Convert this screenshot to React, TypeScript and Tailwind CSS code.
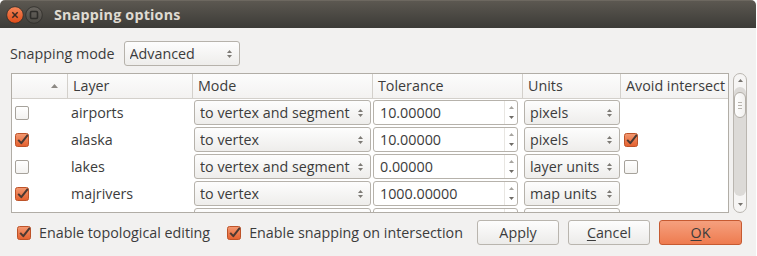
import React from 'react';

type Row = {
  checked: boolean;
  layer: string;
  mode: string;
  tolerance: string;
  units: string;
  avoid: boolean | null;
};

// last row is scrolled mostly out of view, only the top of its editors shows
const rows: Row[] = [
  { checked: false, layer: 'airports', mode: 'to vertex and segment', tolerance: '10.00000', units: 'pixels', avoid: null },
  { checked: true, layer: 'alaska', mode: 'to vertex', tolerance: '10.00000', units: 'pixels', avoid: true },
  { checked: false, layer: 'lakes', mode: 'to vertex and segment', tolerance: '0.00000', units: 'layer units', avoid: false },
  { checked: true, layer: 'majrivers', mode: 'to vertex', tolerance: '1000.00000', units: 'map units', avoid: null },
  { checked: false, layer: '', mode: '', tolerance: '', units: '', avoid: null },
];

// Ambiance style checkbox
const CheckBox = ({ checked }: { checked: boolean }) =>
  checked ? (
    <svg width="14" height="14" viewBox="0 0 14 14" className="shrink-0 overflow-visible">
      <defs>
        <linearGradient id="cbfill" x1="0" y1="0" x2="0" y2="1">
          <stop offset="0" stopColor="#f39a73" />
          <stop offset="1" stopColor="#e45f2d" />
        </linearGradient>
      </defs>
      <rect x="0.5" y="0.5" width="13" height="13" rx="2" fill="url(#cbfill)" stroke="#bd5329" />
      <path d="M3.2 6.8 L6.3 10.2 L12.8 1.8" stroke="#4a3932" strokeWidth="2" fill="none" strokeLinejoin="round" />
    </svg>
  ) : (
    <div className="w-[14px] h-[14px] shrink-0 rounded-[2px] border border-[#a6a29b] bg-linear-to-b from-white to-[#f3f2f0]" />
  );

const UpDown = () => (
  <svg width="7" height="12" viewBox="0 0 7 12" className="shrink-0">
    <path d="M3.5 2 L6 5 L1 5 Z" fill="#7d7a75" />
    <path d="M1 7 L6 7 L3.5 10 Z" fill="#7d7a75" />
  </svg>
);

const Combo = ({ text, width }: { text: string; width: string }) => (
  <div
    className={`${width} h-[25px] rounded-[3px] border border-[#b6b2ab] bg-linear-to-b from-[#fdfdfd] to-[#eeedeb] flex items-center pl-[5px] pr-[6px]`}
  >
    <span className="flex-1 whitespace-nowrap overflow-hidden">{text}</span>
    <UpDown />
  </div>
);

const SpinBox = ({ value }: { value: string }) => (
  <div className="w-[145px] h-[25px] rounded-[3px] border border-[#b6b2ab] bg-white flex items-stretch">
    <span className="flex-1 pl-[6px] flex items-center">{value}</span>
    <div className="w-[13px] border-l border-[#e8e6e2] flex flex-col items-center justify-between py-[5px]">
      <svg width="5" height="3" viewBox="0 0 5 3">
        <path d="M2.5 0 L5 3 L0 3 Z" fill="#a7a49f" />
      </svg>
      <svg width="5" height="3" viewBox="0 0 5 3">
        <path d="M0 0 L5 0 L2.5 3 Z" fill="#6f6c67" />
      </svg>
    </div>
  </div>
);

const Header = () => (
  <div className="grid grid-cols-[55px_125px_180px_150px_98px_1fr] h-[25px] border-b border-[#d3d0cb] bg-linear-to-b from-[#fcfcfc] to-[#f3f2f1]">
    <div className="flex items-center justify-end pr-[9px]">
      <svg width="7" height="4" viewBox="0 0 7 4">
        <path d="M3.5 0 L7 4 L0 4 Z" fill="#8c8984" />
      </svg>
    </div>
    <div className="border-l border-[#d3d0cb] pl-[5px] flex items-center">Layer</div>
    <div className="border-l border-[#d3d0cb] pl-[5px] flex items-center">Mode</div>
    <div className="border-l border-[#d3d0cb] pl-[5px] flex items-center">Tolerance</div>
    <div className="border-l border-[#d3d0cb] pl-[5px] flex items-center">Units</div>
    <div className="border-l border-[#d3d0cb] pl-[5px] flex items-center whitespace-nowrap overflow-hidden">Avoid intersect</div>
  </div>
);

const Scrollbar = () => (
  <div className="w-[14px] h-[140px] rounded-[7px] border border-[#bab6b0] bg-[#f6f5f4] flex flex-col items-center">
    <div className="h-[13px] flex items-center justify-center">
      <svg width="5" height="3" viewBox="0 0 5 3">
        <path d="M2.5 0 L5 3 L0 3 Z" fill="#76736e" />
      </svg>
    </div>
    <div className="w-[12px] flex-1 rounded-[6px] bg-[#dcdad7] flex flex-col">
      <div className="h-[26px] mt-[5px] rounded-[6px] border border-[#b3afa8] bg-linear-to-r from-white to-[#f1f0ee] flex flex-col items-center justify-center gap-[2px]">
        <div className="w-[4px] h-px bg-[#b9b5ae]" />
        <div className="w-[4px] h-px bg-[#b9b5ae]" />
        <div className="w-[4px] h-px bg-[#b9b5ae]" />
      </div>
    </div>
    <div className="h-[16px] flex items-center justify-center">
      <svg width="5" height="3" viewBox="0 0 5 3">
        <path d="M0 0 L5 0 L2.5 3 Z" fill="#76736e" />
      </svg>
    </div>
  </div>
);

const Button = ({ children, primary }: { children: React.ReactNode; primary?: boolean }) => (
  <button
    className={
      primary
        ? 'w-[83px] h-[25px] rounded-[3px] border border-[#c65a31] bg-linear-to-b from-[#f5a07e] to-[#ee7b4f] flex items-center justify-center'
        : 'w-[82px] h-[25px] rounded-[3px] border border-[#b9b5ae] bg-linear-to-b from-[#fdfdfd] to-[#ecebe9] flex items-center justify-center'
    }
  >
    {children}
  </button>
);

export default function App() {
  return (
    <div className="w-[757px] h-[256px] bg-white overflow-hidden font-['Open_Sans',sans-serif] text-[14.3px] leading-[18px] text-[#3c3c3c]">
      <div className="w-[756px] h-[256px] bg-[#f2f1f0] flex flex-col rounded-t-[5px] overflow-hidden">
        {/* title bar */}
        <div className="h-[28px] shrink-0 bg-linear-to-b from-[#5c5851] to-[#3c3b37] border-t border-[#6d6860] flex items-center pl-[6px]">
          <svg width="18" height="18" viewBox="0 0 18 18">
            <defs>
              <linearGradient id="closeg" x1="0" y1="0" x2="0" y2="1">
                <stop offset="0" stopColor="#f5875a" />
                <stop offset="1" stopColor="#df4b17" />
              </linearGradient>
            </defs>
            <circle cx="9" cy="9" r="8.3" fill="url(#closeg)" stroke="#2f2d2a" strokeWidth="0.8" />
            <path d="M6.3 6.3 L11.7 11.7 M11.7 6.3 L6.3 11.7" stroke="#3b2a22" strokeWidth="1.5" />
          </svg>
          <svg width="18" height="18" viewBox="0 0 18 18" className="ml-[1px]">
            <defs>
              <linearGradient id="maxg" x1="0" y1="0" x2="0" y2="1">
                <stop offset="0" stopColor="#6a6660" />
                <stop offset="1" stopColor="#4b4944" />
              </linearGradient>
            </defs>
            <circle cx="9" cy="9" r="8.3" fill="url(#maxg)" stroke="#2f2d2a" strokeWidth="0.8" />
            <rect x="5.5" y="5.5" width="7" height="7" rx="1.2" fill="none" stroke="#2e2d2a" strokeWidth="1.6" />
          </svg>
          <span className="ml-[11px] font-bold text-[#dfdbd2] tracking-[0.2px]">Snapping options</span>
        </div>

        {/* snapping mode */}
        <div className="flex items-center mt-[13px] pl-[10px] gap-[9px]">
          <span>Snapping mode</span>
          <Combo text="Advanced" width="w-[116px]" />
        </div>

        {/* layers table + scrollbar */}
        <div className="flex mt-[7px] pl-[11px] gap-[4px]">
          <div className="w-[718px] h-[140px] border border-[#b1ada6] bg-white overflow-hidden">
            <Header />
            {rows.map((r, i) => (
              <div key={i} className="grid grid-cols-[55px_125px_180px_150px_98px_1fr] h-[27px] items-center">
                <div className="pl-[3px]">{r.layer && <CheckBox checked={r.checked} />}</div>
                <div className="pl-[4px]">{r.layer}</div>
                <div className="pl-[2px]">
                  <Combo text={r.mode} width="w-[177px]" />
                </div>
                <div className="pl-[1px]">
                  <SpinBox value={r.tolerance} />
                </div>
                <div className="pl-[2px]">
                  <Combo text={r.units} width="w-[96px]" />
                </div>
                <div className="pl-[4px]">{r.avoid !== null && <CheckBox checked={r.avoid} />}</div>
              </div>
            ))}
          </div>
          <Scrollbar />
        </div>

        {/* bottom row */}
        <div className="flex items-center mt-[7px] pl-[17px] pr-[14px]">
          <CheckBox checked />
          <span className="ml-[8px]">Enable topological editing</span>
          <div className="ml-[17px]">
            <CheckBox checked />
          </div>
          <span className="ml-[8px]">Enable snapping on intersection</span>
          <div className="ml-auto flex gap-[9px]">
            <Button>Apply</Button>
            <Button>
              <span>
                <span className="underline underline-offset-2">C</span>ancel
              </span>
            </Button>
            <Button primary>
              <span>
                <span className="underline underline-offset-2">O</span>K
              </span>
            </Button>
          </div>
        </div>
      </div>
    </div>
  );
}
